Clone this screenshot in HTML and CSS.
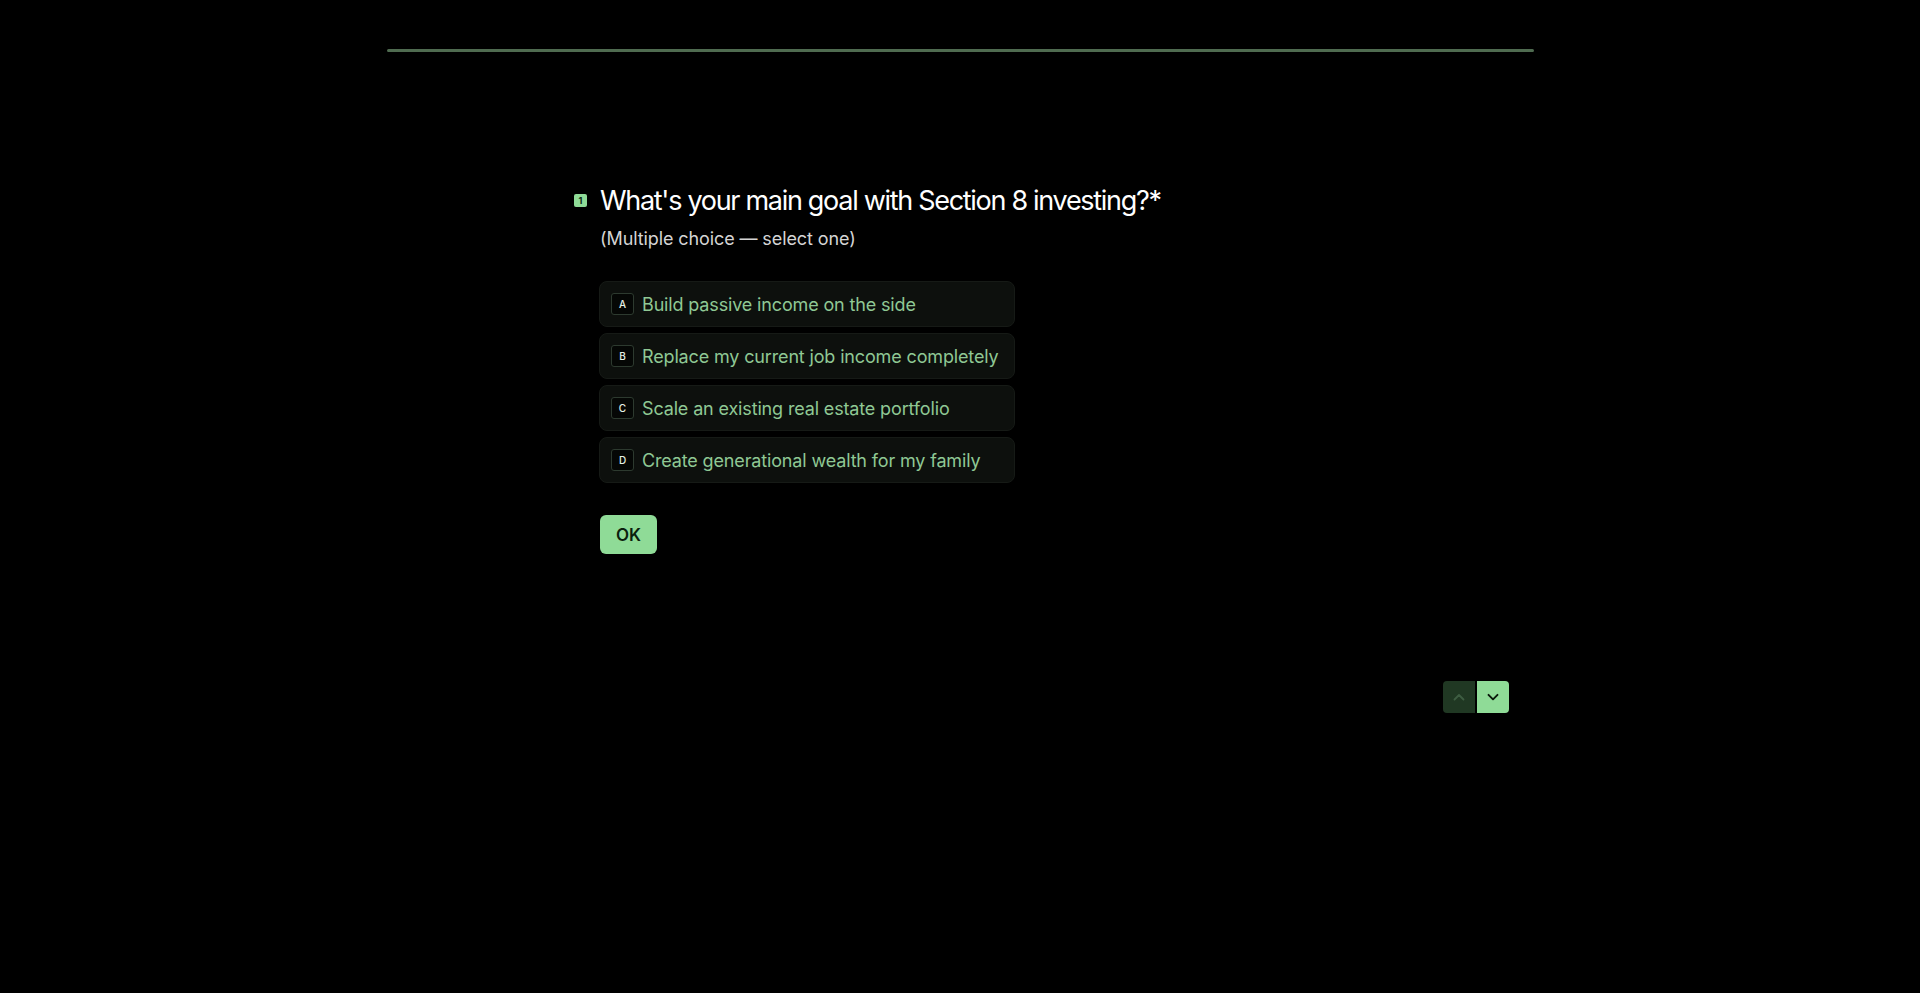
FILE: index.html
```html
<!DOCTYPE html>
<html lang="en">
<head>
<meta charset="utf-8">
<title>Section 8 Investing Survey</title>
<link rel="stylesheet" href="styles.css">
</head>
<body>
<div class="page">
  <div class="progress"><div class="progress-fill"></div></div>

  <main class="question">
    <h1 class="title">
      <span class="num">1</span>
      What's your main goal with Section 8 investing?*
    </h1>
    <p class="hint">(Multiple choice — select one)</p>

    <ul class="choices">
      <li class="choice"><span class="key">A</span><span class="label">Build passive income on the side</span></li>
      <li class="choice"><span class="key">B</span><span class="label">Replace my current job income completely</span></li>
      <li class="choice"><span class="key">C</span><span class="label">Scale an existing real estate portfolio</span></li>
      <li class="choice"><span class="key">D</span><span class="label">Create generational wealth for my family</span></li>
    </ul>

    <button class="ok">OK</button>
  </main>

  <nav class="pager">
    <button class="pg pg-up" aria-label="Previous">
      <svg width="16" height="16" viewBox="0 0 16 16"><path d="M3.5 10.5 8 6l4.5 4.5" fill="none" stroke="currentColor" stroke-width="1.8" stroke-linecap="round" stroke-linejoin="round"/></svg>
    </button>
    <button class="pg pg-down" aria-label="Next">
      <svg width="16" height="16" viewBox="0 0 16 16"><path d="M3.5 5.8 8 10.3l4.5-4.5" fill="none" stroke="currentColor" stroke-width="1.9" stroke-linecap="round" stroke-linejoin="round"/></svg>
    </button>
  </nav>
</div>
</body>
</html>
```
FILE: styles.css
```css
* { box-sizing: border-box; }

html, body {
  margin: 0;
  padding: 0;
  background: #000;
}

body {
  font-family: Inter, "Noto Sans", sans-serif;
  color: #fff;
  height: 993px;
  overflow: hidden;
}

.page {
  padding-top: 49px;
}

.progress {
  width: 1147px;
  height: 3px;
  margin: 0 auto;
  background: #1b2a1d;
  border-radius: 2px;
  overflow: hidden;
}

.progress-fill {
  width: 100%;
  height: 100%;
  background: #4f6b50;
}

.question {
  width: 720px;
  margin: 131px auto 0;
}

.title {
  position: relative;
  margin: 0;
  font-size: 27px;
  font-weight: 400;
  line-height: 36px;
  letter-spacing: -1.3px;
  color: #fff;
}

.num {
  position: absolute;
  left: -26px;
  top: 11px;
  width: 13px;
  height: 13px;
  border-radius: 2px;
  background: #8fdb97;
  color: #0b2a10;
  font-size: 9px;
  font-weight: 700;
  line-height: 13px;
  text-align: center;
  letter-spacing: 0;
}

.hint {
  margin: 7px 0 0;
  font-size: 18px;
  line-height: 26px;
  color: #d4d4d4;
  letter-spacing: -0.1px;
}

.choices {
  list-style: none;
  margin: 29px 0 0;
  padding: 0;
  display: flex;
  flex-direction: column;
  gap: 6px;
}

.choice {
  width: 416px;
  height: 46px;
  margin-left: -1px;
  padding: 0 11px;
  display: flex;
  align-items: center;
  gap: 8px;
  background: #0d100d;
  border: 1px solid #161a16;
  border-radius: 8px;
}

.key {
  flex: none;
  width: 23px;
  height: 22px;
  display: flex;
  align-items: center;
  justify-content: center;
  border: 1px solid #2d3a2f;
  border-radius: 3px;
  background: #050705;
  color: #e6f2e6;
  font-size: 10px;
  font-weight: 500;
}

.label {
  font-size: 18px;
  color: #8fc894;
  letter-spacing: -0.15px;
  white-space: nowrap;
}

.ok {
  margin-top: 32px;
  width: 57px;
  height: 39px;
  border: 0;
  border-radius: 6px;
  background: #8fdb97;
  color: #0c1f0e;
  font-family: Inter, "Noto Sans", sans-serif;
  font-size: 17px;
  font-weight: 600;
  padding: 0;
}

.pager {
  width: 1147px;
  margin: 127px auto 0;
  padding-right: 25px;
  display: flex;
  justify-content: flex-end;
  gap: 2px;
}

.pg {
  width: 32px;
  height: 32px;
  border: 0;
  padding: 0;
  display: flex;
  align-items: center;
  justify-content: center;
}

.pg-up {
  background: #203823;
  color: #3e5d42;
  border-radius: 4px 0 0 4px;
}

.pg-down {
  background: #8fdb97;
  color: #0a180b;
  border-radius: 0 4px 4px 0;
}
```
